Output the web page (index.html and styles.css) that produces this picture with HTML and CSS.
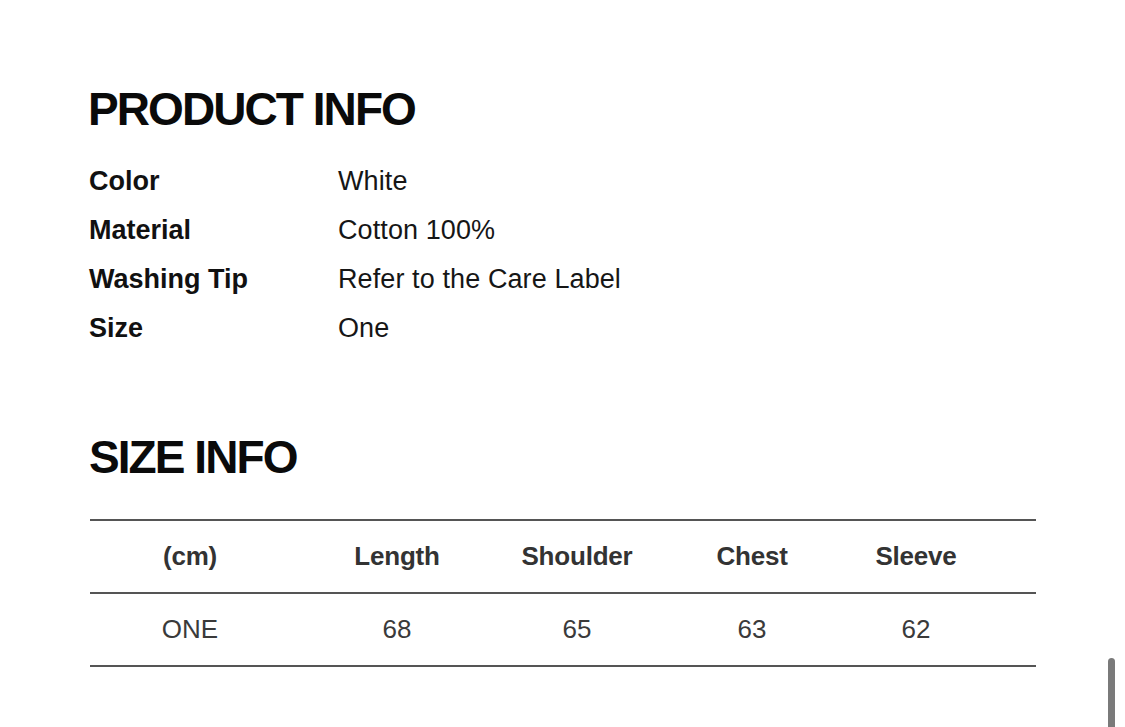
FILE: index.html
```html
<!DOCTYPE html>
<html lang="en">
<head>
<meta charset="utf-8">
<title>Product Info</title>
<link rel="stylesheet" href="styles.css">
</head>
<body>
<main class="page">
  <h2 class="section-title title-product">PRODUCT INFO</h2>
  <dl class="info-list">
    <div class="info-row"><dt>Color</dt><dd>White</dd></div>
    <div class="info-row"><dt>Material</dt><dd>Cotton 100%</dd></div>
    <div class="info-row"><dt>Washing Tip</dt><dd>Refer to the Care Label</dd></div>
    <div class="info-row"><dt>Size</dt><dd>One</dd></div>
  </dl>

  <h2 class="section-title title-size">SIZE INFO</h2>
  <div class="size-table">
    <div class="size-row size-head">
      <div class="cell">(cm)</div>
      <div class="cell">Length</div>
      <div class="cell">Shoulder</div>
      <div class="cell">Chest</div>
      <div class="cell">Sleeve</div>
    </div>
    <div class="size-row size-body">
      <div class="cell">ONE</div>
      <div class="cell">68</div>
      <div class="cell">65</div>
      <div class="cell">63</div>
      <div class="cell">62</div>
    </div>
  </div>
</main>
<div class="scroll-thumb"></div>
</body>
</html>
```

FILE: styles.css
```css
html, body {
  margin: 0;
  padding: 0;
  background: #ffffff;
}

body {
  font-family: "Liberation Sans", Arial, sans-serif;
  color: #111111;
  overflow: hidden;
}

.page {
  padding: 86px 0 0 89px;
}

.section-title {
  margin: 0;
  font-size: 46px;
  line-height: 46px;
  font-weight: 700;
  letter-spacing: -0.042em;
  color: #0a0a0a;
}

.title-product {
  margin-left: -1px;
}

.info-list {
  margin: 25px 0 0 0;
  padding: 0;
}

.info-row {
  display: flex;
  height: 49px;
  line-height: 49px;
  font-size: 27px;
}

.info-row dt {
  width: 249px;
  font-weight: 700;
  letter-spacing: 0;
  color: #111111;
}

.info-row dd {
  margin: 0;
  font-weight: 400;
  letter-spacing: 0.1px;
  color: #161616;
}

.title-size {
  margin-top: 81px;
}

.size-table {
  margin: 39px 0 0 1px;
  width: 946px;
  border-top: 2px solid #555555;
}

.size-row {
  display: grid;
  grid-template-columns: 200px 214px 146px 204px 1fr;
  height: 71px;
  line-height: 71px;
  font-size: 26px;
  border-bottom: 2px solid #555555;
  color: #333333;
}

.size-head {
  font-weight: 700;
  letter-spacing: -0.2px;
}

.size-body {
  font-weight: 400;
  color: #3a3a3a;
}

.cell {
  text-align: center;
}

.cell:last-child {
  padding-right: 58px;
}

.scroll-thumb {
  position: fixed;
  left: 1108px;
  top: 658px;
  width: 7px;
  height: 80px;
  border-radius: 4px;
  background: #7a7a7a;
}
```
